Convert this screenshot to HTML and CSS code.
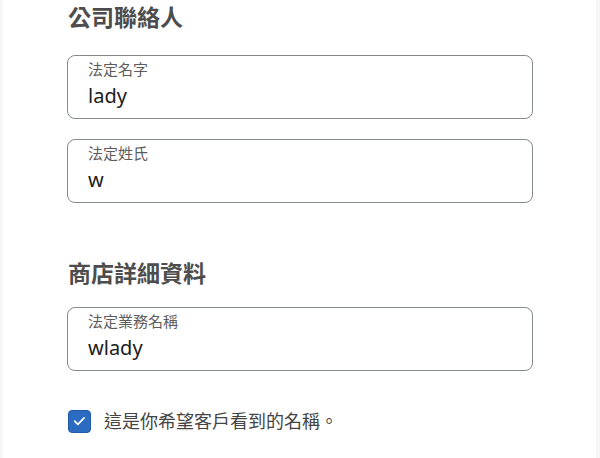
FILE: index.html
```html
<!DOCTYPE html>
<html lang="zh-TW">
<head>
    <meta charset="UTF-8">
    <meta name="viewport" content="width=device-width, initial-scale=1.0">
    <title>商店設定</title>
    <link rel="stylesheet" href="styles.css">
</head>
<body>
    <div class="panel">
        <!-- 公司聯絡人 -->
        <h2 class="section-title">公司聯絡人</h2>
        <div class="field">
            <label class="field-label">法定名字</label>
            <div class="field-value">lady</div>
        </div>
        <div class="field">
            <label class="field-label">法定姓氏</label>
            <div class="field-value">w</div>
        </div>

        <!-- 商店詳細資料 -->
        <h2 class="section-title second">商店詳細資料</h2>
        <div class="field">
            <label class="field-label">法定業務名稱</label>
            <div class="field-value">wlady</div>
        </div>

        <div class="check-row">
            <span class="checkbox">
                <svg viewBox="0 0 22 22" width="22" height="22">
                    <path d="M6 11.2l3.3 3.3 6.5-6.8" fill="none" stroke="#fff" stroke-width="1.8" stroke-linecap="round" stroke-linejoin="round"/>
                </svg>
            </span>
            <span class="check-text">這是你希望客戶看到的名稱。</span>
        </div>
    </div>
</body>
</html>
```

FILE: styles.css
```css
body {
    margin: 0;
    background-color: #f6f6f7;
    font-family: "Noto Sans", "Noto Sans CJK TC", sans-serif;
}

.panel {
    margin: 0 4px 0 3px;
    min-height: 458px;
    background: #fff;
    padding: 1px 63px 0 64px;
}

.section-title {
    margin: 0 0 22px 1px;
    font-size: 23px;
    line-height: 32px;
    font-weight: 600;
    color: #4d4d4d;
}

.section-title.second {
    margin-top: 54px;
    margin-bottom: 18px;
}

.field {
    border: 1px solid #858a8f;
    border-radius: 8px;
    height: 64px;
    box-sizing: border-box;
    padding: 3px 20px 0 20px;
    margin-bottom: 20px;
}

.field-label {
    display: block;
    font-size: 15px;
    line-height: 20px;
    color: #5c5c5c;
}

.field-value {
    margin-top: 3px;
    font-size: 20px;
    line-height: 28px;
    color: #202020;
}

.check-row {
    display: flex;
    align-items: center;
    gap: 13px;
    margin-top: 38px;
    margin-left: 1px;
}

.checkbox {
    flex: none;
    width: 23px;
    height: 23px;
    box-sizing: border-box;
    border: 1px solid #1f5aa6;
    border-radius: 4px;
    background: #2b6bc2;
    display: flex;
    align-items: center;
    justify-content: center;
}

.check-text {
    font-size: 18px;
    line-height: 24px;
    color: #444;
}
```
